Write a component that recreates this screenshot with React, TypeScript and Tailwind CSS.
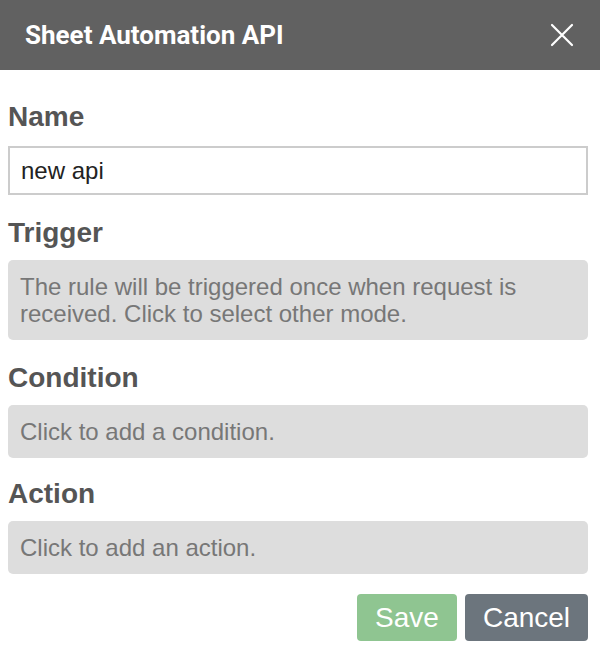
import React from 'react';

const Label = ({ children, mt }: { children: React.ReactNode; mt: string }) => (
  <div className={`${mt} text-[28px] leading-[32px] font-bold text-[#555]`}>{children}</div>
);

const Box = ({ children }: { children: React.ReactNode }) => (
  <div className="mt-[11px] rounded-[5px] bg-[#dddddd] px-[12px] py-[13px] text-[24px] leading-[27px] text-[#777]">{children}</div>
);

export default function App() {
  return (
    <div className="w-[600px] h-[654px] bg-white" style={{ fontFamily: '"Liberation Sans", Arial, sans-serif' }}>
      <div className="h-[70px] bg-[#616161] flex items-center justify-between pl-[25px] pr-[26px]">
        <span className="text-white text-[26px] font-bold" style={{ fontFamily: 'Roboto, sans-serif' }}>Sheet Automation API</span>
        <svg width="24" height="24" viewBox="0 0 24 24" fill="none" stroke="white" strokeWidth="2.2" strokeLinecap="round">
          <path d="M2 2 L22 22 M22 2 L2 22" />
        </svg>
      </div>
      <div className="pl-[8px] pr-[12px] pt-[31px]">
        <Label mt="mt-0">Name</Label>
        <input
          defaultValue="new api"
          className="mt-[13px] block w-full h-[49px] border-2 border-[#cccccc] px-[11px] text-[24px] text-[#222] outline-none"
        />
        <Label mt="mt-[22px]">Trigger</Label>
        <Box>The rule will be triggered once when request is received. Click to select other mode.</Box>
        <Label mt="mt-[22px]">Condition</Label>
        <Box>Click to add a condition.</Box>
        <Label mt="mt-[20px]">Action</Label>
        <Box>Click to add an action.</Box>
        <div className="mt-[20px] flex justify-end gap-[8px]">
          <button className="w-[100px] h-[47px] rounded-[4px] bg-[#8fc591] text-white text-[28px]">Save</button>
          <button className="w-[123px] h-[47px] rounded-[4px] bg-[#6c757d] text-white text-[28px]">Cancel</button>
        </div>
      </div>
    </div>
  );
}
